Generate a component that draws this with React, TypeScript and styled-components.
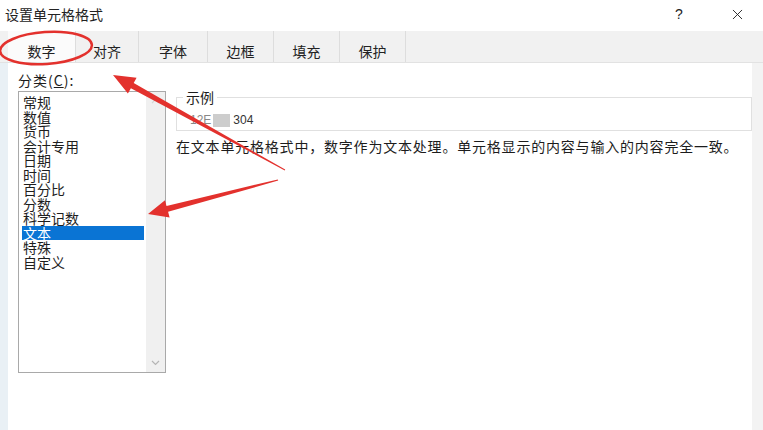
import React from 'react';
import styled, { createGlobalStyle } from 'styled-components';
import { X } from 'lucide-react';

const GlobalStyle = createGlobalStyle`
  html, body {
    margin: 0;
    padding: 0;
    background: #ffffff;
  }
  body {
    font-family: "Microsoft YaHei", "Noto Sans CJK SC", "Noto Sans", sans-serif;
    color: #1c1c1c;
  }
`;

const Dialog = styled.div`
  position: relative;
  width: 763px;
  height: 430px;
  overflow: hidden;
  background: #ffffff;
  display: flex;
  flex-direction: column;
`;

const TitleBar = styled.div`
  height: 31px;
  display: flex;
  align-items: center;
  padding: 0 0 3px 5px;
  box-sizing: border-box;
  font-size: 14px;
  color: #222;

  .title {
    flex: 1;
  }

  .help {
    width: 20px;
    text-align: center;
    font-family: "Liberation Sans", sans-serif;
    font-size: 14px;
    margin-right: 38px;
  }

  .close {
    width: 20px;
    margin-right: 16px;
    display: flex;
    justify-content: center;
  }
`;

const TabStrip = styled.div`
  height: 31px;
  background: #f1f1f1;
  display: flex;
  padding-left: 8px;
  border-bottom: 1px solid #e2e2e2;
`;

const Tab = styled.div<{ $active?: boolean; $w: number }>`
  width: ${p => p.$w}px;
  display: flex;
  align-items: center;
  justify-content: center;
  font-size: 14px;
  padding-top: 8px;
  background: ${p => (p.$active ? '#fbfbfb' : 'transparent')};
  border-right: 1px solid #dddddd;
  color: #222;
`;

const Body = styled.div`
  flex: 1;
  display: flex;
  border-left: 8px solid #e9f0f5;
  border-right: 11px solid #f3f3f3;
`;

const LeftCol = styled.div`
  width: 148px;
  padding: 8px 0 0 10px;
  display: flex;
  flex-direction: column;
`;

const Label = styled.div`
  font-size: 14px;
  letter-spacing: 1px;
  line-height: 18px;
  height: 20px;
`;

const ListBox = styled.div`
  width: 146px;
  height: 280px;
  border: 1px solid #a9a9a9;
  display: flex;
  background: #fff;
`;

const Items = styled.div`
  flex: 1;
  padding: 3px 0 0 3px;
`;

const Item = styled.div<{ $selected?: boolean }>`
  font-size: 14px;
  line-height: 14.5px;
  height: 14.5px;
  padding-left: 1px;
  width: 121px;
  white-space: nowrap;
  background: ${p => (p.$selected ? '#0a74d4' : 'transparent')};
  color: ${p => (p.$selected ? '#ffffff' : '#1e1e1e')};
`;

const ScrollBar = styled.div`
  width: 19px;
  background: #f0f0f0;
  display: flex;
  flex-direction: column;
  justify-content: space-between;
  align-items: center;
  padding: 6px 0 6px;
`;

const RightCol = styled.div`
  flex: 1;
  padding: 26px 0 0 10px;
  display: flex;
  flex-direction: column;
`;

const Sample = styled.fieldset`
  margin: 0;
  padding: 0 0 4px 6px;
  border: 1px solid #e0e0e0;
  height: 42px;
  box-sizing: border-box;

  legend {
    font-size: 14px;
    padding: 0 3px;
    margin-left: 0;
    line-height: 16px;
  }
`;

const SampleValue = styled.div`
  display: flex;
  align-items: center;
  font-family: "Liberation Sans", sans-serif;
  font-size: 12px;
  color: #333;
  height: 18px;
  margin: 6px 0 0 7px;

  .blur {
    width: 17px;
    height: 13px;
    background: #cdcdcd;
    margin: 0 3px 0 2px;
  }

  .faint {
    color: #888;
  }
`;

const Description = styled.div`
  font-size: 14px;
  letter-spacing: 0.8px;
  margin-top: 6px;
  line-height: 18px;
  white-space: nowrap;
`;

const Annotations = styled.svg`
  position: absolute;
  left: 0;
  top: 0;
  pointer-events: none;
`;

const tabs = [
  { name: '数字', w: 67 },
  { name: '对齐', w: 62 },
  { name: '字体', w: 68 },
  { name: '边框', w: 65 },
  { name: '填充', w: 65 },
  { name: '保护', w: 65 },
];

const categories = ['常规', '数值', '货币', '会计专用', '日期', '时间', '百分比', '分数', '科学记数', '文本', '特殊', '自定义'];

const App = () => {
  return (
    <Dialog>
      <GlobalStyle />
      <TitleBar>
        <span className="title">设置单元格格式</span>
        <span className="help">?</span>
        <span className="close"><X size={17} strokeWidth={1.3} /></span>
      </TitleBar>

      <TabStrip>
        {tabs.map((t, i) => (
          <Tab key={t.name} $w={t.w} $active={i === 0}>{t.name}</Tab>
        ))}
      </TabStrip>

      <Body>
        <LeftCol>
          <Label>分类(<u>C</u>):</Label>
          <ListBox>
            <Items>
              {categories.map(c => (
                <Item key={c} $selected={c === '文本'}>{c}</Item>
              ))}
            </Items>
            <ScrollBar>
              <svg width="9" height="6" viewBox="0 0 9 6"><path d="M1 5 L4.5 1.5 L8 5" fill="none" stroke="#d6d6d6" strokeWidth="1.2" /></svg>
              <svg width="9" height="6" viewBox="0 0 9 6"><path d="M1 1 L4.5 4.5 L8 1" fill="none" stroke="#b5b5b5" strokeWidth="1.2" /></svg>
            </ScrollBar>
          </ListBox>
        </LeftCol>

        <RightCol>
          <Sample>
            <legend>示例</legend>
            <SampleValue>
              <span className="faint">12E</span>
              <span className="blur" />
              <span>304</span>
            </SampleValue>
          </Sample>
          <Description>在文本单元格格式中，数字作为文本处理。单元格显示的内容与输入的内容完全一致。</Description>
        </RightCol>
      </Body>

      <Annotations width="763" height="430" viewBox="0 0 763 430">
        <ellipse cx="46" cy="48" rx="46" ry="16" fill="none" stroke="#e3312d" strokeWidth="2.5" transform="rotate(-4 46 48)" />
        <polygon
          points="113,75 136.6,77.7 133.7,83 285.2,169.6 284.8,170.4 130.9,88.2 127.9,93.5"
          fill="#e3312d"
        />
        <polygon
          points="148,214 169.6,217.6 168.1,211.8 278.2,180.6 277.8,179.4 166.5,206 165,200.2"
          fill="#e3312d"
        />
      </Annotations>
    </Dialog>
  );
};

export default App;
